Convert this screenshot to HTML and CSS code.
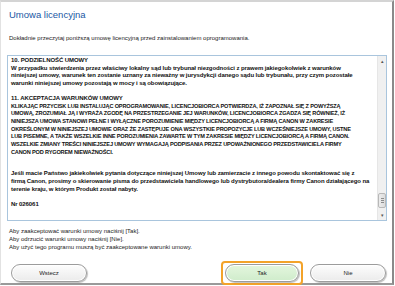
FILE: index.html
```html
<!DOCTYPE html>
<html lang="pl">
<head>
    <meta charset="UTF-8">
    <title>Umowa licencyjna</title>
    <link rel="stylesheet" href="styles.css">
</head>
<body>
    <div class="window">
        <h1 class="title">Umowa licencyjna</h1>
        <p class="intro">Dokładnie przeczytaj poniższą umowę licencyjną przed zainstalowaniem oprogramowania.</p>

        <div class="license-box">
            <div class="license-text">
                <p>10. PODZIELNOŚĆ UMOWY<br>
                W przypadku stwierdzenia przez właściwy lokalny sąd lub trybunał niezgodności z prawem jakiegokolwiek z warunków<br>
                niniejszej umowy, warunek ten zostanie uznany za nieważny w jurysdykcji danego sądu lub trybunału, przy czym pozostałe<br>
                warunki niniejszej umowy pozostają w mocy i są obowiązujące.</p>
                <p>11. AKCEPTACJA WARUNKÓW UMOWY<br>
                <span class="caps">KLIKAJĄC PRZYCISK LUB INSTALUJĄC OPROGRAMOWANIE, LICENCJOBIORCA POTWIERDZA, IŻ ZAPOZNAŁ SIĘ Z POWYŻSZĄ<br>
                UMOWĄ, ZROZUMIAŁ JĄ I WYRAŻA ZGODĘ NA PRZESTRZEGANIE JEJ WARUNKÓW, LICENCJOBIORCA ZGADZA SIĘ RÓWNIEŻ, IŻ<br>
                NINIEJSZA UMOWA STANOWI PEŁNE I WYŁĄCZNE POROZUMIENIE MIĘDZY LICENCJOBIORCĄ A FIRMĄ CANON W ZAKRESIE<br>
                OKREŚLONYM W NINIEJSZEJ UMOWIE ORAZ ŻE ZASTĘPUJE ONA WSZYSTKIE PROPOZYCJE LUB WCZEŚNIEJSZE UMOWY, USTNE<br>
                LUB PISEMNE, A TAKŻE WSZELKIE INNE POROZUMIENIA ZAWARTE W TYM ZAKRESIE MIĘDZY LICENCJOBIORCĄ A FIRMĄ CANON.<br>
                WSZELKIE ZMIANY TREŚCI NINIEJSZEJ UMOWY WYMAGAJĄ PODPISANIA PRZEZ UPOWAŻNIONEGO PRZEDSTAWICIELA FIRMY<br>
                CANON POD RYGOREM NIEWAŻNOŚCI.</span></p>
                <p class="gap">Jeśli macie Państwo jakiekolwiek pytania dotyczące niniejszej Umowy lub zamierzacie z innego powodu skontaktować się z<br>
                firmą Canon, prosimy o skierowanie pisma do przedstawiciela handlowego lub dystrybutora/dealera firmy Canon działającego na<br>
                terenie kraju, w którym Produkt został nabyty.</p>
                <p>Nr 026061</p>
            </div>
            <div class="scrollbar">
                <div class="scroll-arrow">&#9652;</div>
                <div class="scroll-track">
                    <div class="scroll-thumb"><span></span><span></span><span></span></div>
                </div>
                <div class="scroll-arrow">&#9662;</div>
            </div>
        </div>

        <div class="notes">
            Aby zaakceptować warunki umowy naciśnij [Tak].<br>
            Aby odrzucić warunki umowy naciśnij [Nie].<br>
            Aby użyć tego programu muszą być zaakceptowane warunki umowy.
        </div>

        <div class="actions">
            <button class="btn">Wstecz</button>
            <div class="right-actions">
                <div class="focus-ring"><button class="btn btn-yes">Tak</button></div>
                <button class="btn">Nie</button>
            </div>
        </div>
    </div>
</body>
</html>
```

FILE: styles.css
```css
* {
    margin: 0;
    padding: 0;
    box-sizing: border-box;
}
body {
    font-family: 'Liberation Sans', Arial, sans-serif;
    background: #fff;
    width: 395px;
    height: 286px;
    overflow: hidden;
}
.window {
    width: 394px;
    height: 285px;
    border-top: 2px solid #d4d4d4;
    border-left: 1px solid #e2e2e2;
    border-right: 2px solid #8a8a8a;
    border-bottom: 2px solid #9a9a9a;
    padding: 0 6px 0 6px;
    display: flex;
    flex-direction: column;
}
.title {
    font-size: 9.5px;
    font-weight: 400;
    color: #1a58a4;
    margin: 8px 0 0 2px;
    line-height: 10px;
}
.intro {
    font-size: 6px;
    color: #222;
    margin: 14px 0 0 2px;
    line-height: 8px;
}
.license-box {
    margin-top: 13px;
    width: 380px;
    height: 166px;
    border: 1px solid #a9c5dd;
    display: flex;
    flex-shrink: 0;
}
.license-text {
    flex: 1;
    overflow: hidden;
    white-space: nowrap;
    padding: 1px 0 0 3px;
    font-size: 6px;
    font-weight: 700;
    letter-spacing: -0.08px;
    line-height: 7.7px;
    color: #111;
}
.license-text p {
    margin-bottom: 7px;
}
.license-text p.gap {
    margin-top: 14px;
}
.caps {
    font-size: 5.6px;
    letter-spacing: -0.17px;
}
.scrollbar {
    width: 9px;
    display: flex;
    flex-direction: column;
    background: #f0f0f0;
    border-left: 1px solid #e6e6e6;
}
.scroll-arrow {
    height: 10px;
    font-size: 5px;
    line-height: 10px;
    text-align: center;
    color: #555;
}
.scroll-track {
    flex: 1;
    display: flex;
    flex-direction: column;
    justify-content: flex-end;
    padding-bottom: 2px;
}
.scroll-thumb {
    height: 15px;
    background: linear-gradient(to right, #ececec, #dcdcdc);
    border: 1px solid #b8b8b8;
    border-radius: 2px;
    display: flex;
    flex-direction: column;
    justify-content: center;
    align-items: center;
    gap: 1px;
}
.scroll-thumb span {
    width: 3px;
    height: 1px;
    background: #8c8c8c;
}
.notes {
    margin: 7px 0 0 2px;
    font-size: 6px;
    line-height: 7.8px;
    color: #222;
}
.actions {
    margin-top: 10px;
    display: flex;
    justify-content: space-between;
    align-items: center;
    padding: 0 0 0 4px;
}
.right-actions {
    display: flex;
    align-items: center;
    gap: 7px;
}
.btn {
    width: 76px;
    height: 18px;
    border: 1px solid #9c9c9c;
    border-radius: 9px;
    background: linear-gradient(to bottom, #fdfdfd, #ebebeb);
    box-shadow: inset 0 0 0 1px #fff, 1px 1px 1px rgba(0, 0, 0, 0.25);
    font-family: 'Liberation Sans', Arial, sans-serif;
    font-size: 6px;
    color: #222;
}
.btn-yes {
    width: 74px;
    background: linear-gradient(to bottom, #e4f6de, #cfeccb);
}
.focus-ring {
    border: 2px solid #f3a32a;
    border-radius: 4px;
    padding: 1px 2px;
    display: flex;
}
```
